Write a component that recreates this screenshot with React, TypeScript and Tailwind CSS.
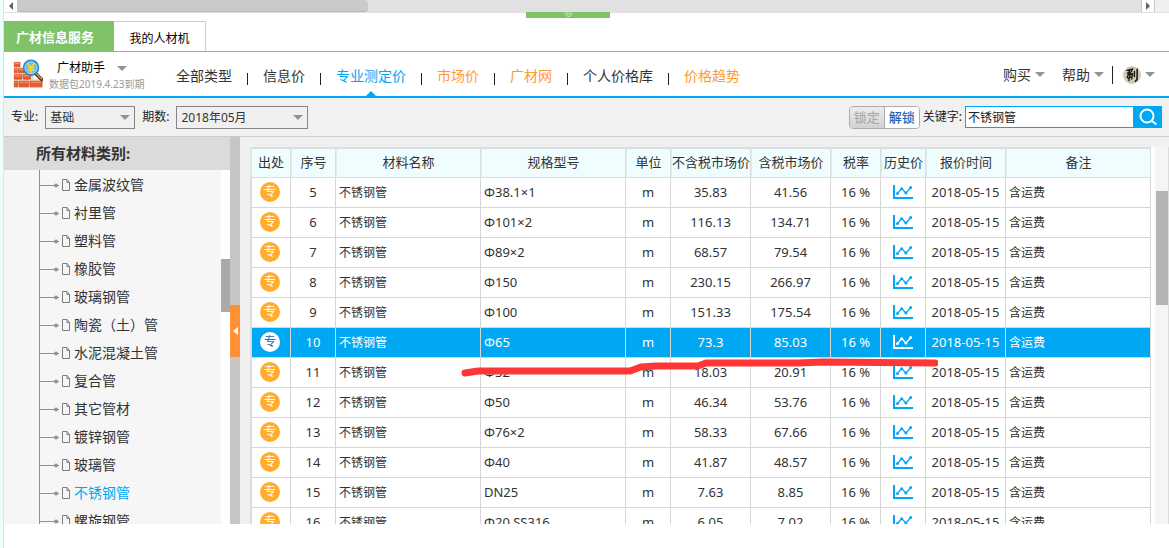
import React, { useState } from "react";

type Row = { no: number; spec: string; net: string; gross: string };

const rows: Row[] = [
  { no: 5, spec: "Φ38.1×1", net: "35.83", gross: "41.56" },
  { no: 6, spec: "Φ101×2", net: "116.13", gross: "134.71" },
  { no: 7, spec: "Φ89×2", net: "68.57", gross: "79.54" },
  { no: 8, spec: "Φ150", net: "230.15", gross: "266.97" },
  { no: 9, spec: "Φ100", net: "151.33", gross: "175.54" },
  { no: 10, spec: "Φ65", net: "73.3", gross: "85.03" },
  { no: 11, spec: "Φ32", net: "18.03", gross: "20.91" },
  { no: 12, spec: "Φ50", net: "46.34", gross: "53.76" },
  { no: 13, spec: "Φ76×2", net: "58.33", gross: "67.66" },
  { no: 14, spec: "Φ40", net: "41.87", gross: "48.57" },
  { no: 15, spec: "DN25", net: "7.63", gross: "8.85" },
  { no: 16, spec: "Φ20 SS316", net: "6.05", gross: "7.02" },
];

const categories = [
  "金属波纹管", "衬里管", "塑料管", "橡胶管", "玻璃钢管", "陶瓷（土）管", "水泥混凝土管",
  "复合管", "其它管材", "镀锌钢管", "玻璃管", "不锈钢管", "螺旋钢管",
];

const navItems = [
  { label: "全部类型", tone: "text-[#333]" },
  { label: "信息价", tone: "text-[#333]" },
  { label: "专业测定价", tone: "text-[#00a8f3]", active: true },
  { label: "市场价", tone: "text-[#ff9933]" },
  { label: "广材网", tone: "text-[#ff9933]" },
  { label: "个人价格库", tone: "text-[#333]" },
  { label: "价格趋势", tone: "text-[#ff9933]" },
];

const columns = [
  { label: "出处", width: "w-10" },
  { label: "序号", width: "w-[45px]" },
  { label: "材料名称", width: "w-[145px]" },
  { label: "规格型号", width: "w-[145px]" },
  { label: "单位", width: "w-[45px]" },
  { label: "不含税市场价", width: "w-20" },
  { label: "含税市场价", width: "w-20" },
  { label: "税率", width: "w-[50px]" },
  { label: "历史价", width: "w-[45px]" },
  { label: "报价时间", width: "w-20" },
  { label: "备注", width: "" },
];

function Caret({ className = "" }: { className?: string }) {
  return (
    <svg viewBox="0 0 10 5" className={`h-[5px] w-[10px] shrink-0 fill-[#939393] ${className}`} aria-hidden="true">
      <path d="M0 0h10L5 5z" />
    </svg>
  );
}

function Logo() {
  return (
    <svg viewBox="0 0 30 30" className="h-[30px] w-[30px]" aria-hidden="true">
      <path d="M1 3h7v7h9v5h4v5h9v9H1z" fill="#f7d9bd" />
      <g fill="#ee5a30" stroke="#b93415" strokeWidth=".5">
        <path d="M1.3 3.4h5.4v4.4H1.3zM1.3 9.4h3v4.4h-3zM5.5 9.4h7v4.4h-7zM1.3 15.6h7.6v4.6H1.3zM10.3 15.6h7.3v4.6h-7.3zM1.3 22.1h3.6v5.7H1.3zM6.2 22.1h9.4v5.7H6.2zM17 22.1h12v5.7H17z" />
      </g>
      <g fill="#ff9a60">
        <path d="M2 4h4v1H2zM2 10h2v1H2zM6 10h5v1H6zM2 16.2h6v1H2zM11 16.2h6v1h-6zM2 22.7h2v1H2zM7 22.7h8v1H7zM18 22.7h10v1H18z" />
      </g>
      <path d="M22.5 14.5l6.2 6" stroke="#5c3824" strokeWidth="3.4" strokeLinecap="round" />
      <path d="M23.5 15l5 4.8" stroke="#d9914b" strokeWidth="1.3" strokeLinecap="round" />
      <circle cx="18" cy="8.7" r="7.4" fill="#66bdf0" stroke="#2589c7" strokeWidth="1.7" />
      <circle cx="18" cy="8.7" r="6" fill="none" stroke="#b4e3fa" strokeWidth=".8" />
      <path d="M14.5 4.3l3.5 4 3.5-4M18 8.3v5.4M14.8 8.5h6.4M14.8 11h6.4" fill="none" stroke="#f8cf2c" strokeWidth="2" />
    </svg>
  );
}

function Avatar() {
  return (
    <svg viewBox="0 0 18 18" className="h-[18px] w-[18px]" aria-hidden="true">
      <circle cx="9" cy="9" r="9" fill="#d2cab8" />
      <g fill="none" stroke="#17130f" strokeLinecap="round" strokeLinejoin="round">
        <path d="M4 4.4L9.8 3 8.2 5.8 4.4 7.2M6.6 4.4L4.2 11.5M5.3 8.8l4.2-1.2-.8 5.6M7.3 7l-1.4 7.7M5 12.2l3-1.2" strokeWidth="1.3" />
        <path d="M11.4 5.4v5.2M14.2 3.2l-.2 10.4-1.7 1.7" strokeWidth="1.5" />
      </g>
    </svg>
  );
}

function TrendIcon() {
  return (
    <svg viewBox="0 0 20 15" className="mx-auto block h-[15px] w-5" fill="none" stroke="currentColor" aria-hidden="true">
      <path d="M1 0v13h19" strokeWidth="2" />
      <path d="M4.5 8.5l4.2-5 4.2 4.5 5-5.5" strokeWidth="1.3" />
      <g fill="currentColor" stroke="none">
        <circle cx="4.5" cy="8.5" r="1.5" />
        <circle cx="8.7" cy="3.7" r="1.5" />
        <circle cx="12.9" cy="8" r="1.5" />
        <circle cx="17.7" cy="2.6" r="1.5" />
      </g>
    </svg>
  );
}

function Combo({ id, label, options, width }: { id: string; label: string; options: string[]; width: string }) {
  return (
    <div className="flex items-center gap-[7px]">
      <label htmlFor={id}>{label}</label>
      <div className={`relative ${width}`}>
        <select id={id} className="h-[23px] w-full appearance-none border border-[#858585] bg-[#f0f0f0] pt-px pl-1 text-xs text-[#333] outline-none">
          {options.map((o) => (
            <option key={o}>{o}</option>
          ))}
        </select>
        <Caret className="pointer-events-none absolute top-[9px] right-[5px]" />
      </div>
    </div>
  );
}

function TopScroll() {
  return (
    <div className="relative flex h-[13px] shrink-0 border-b border-[#e1e1e1] bg-[#e1e1e1]">
      <button aria-label="向左滚动" className="flex w-[14px] items-center justify-center border-r border-[#c8c8c8] bg-white">
        <svg viewBox="0 0 4 8" className="h-2 w-1 fill-[#606060]"><path d="M4 0v8L0 4z" /></svg>
      </button>
      <div className="w-[30%] rounded-r-sm border-b border-[#b8b8b8] bg-[#cacaca]" />
      <div className="flex-1" />
      <button aria-label="向右滚动" className="flex w-[14px] items-center justify-center border-x border-[#c8c8c8] bg-white">
        <svg viewBox="0 0 4 8" className="h-2 w-1 fill-[#606060]"><path d="M0 0v8l4-4z" /></svg>
      </button>
      <div className="w-[14px] bg-[#f0f0f0]" />
      <button aria-label="收起面板" className="absolute top-3 left-[calc(50%-61px)] z-10 flex h-[6px] w-[84px] justify-center bg-[#80c269]">
        <svg viewBox="0 0 9 6" className="ml-[2px] h-[6px] w-[9px] fill-none stroke-[#dff3d6]"><path d="M2.5 0l2 2 2-2M.5 1l4 4 4-4" /></svg>
      </button>
    </div>
  );
}

function Tree({ current, onPick }: { current: string; onPick: (c: string) => void }) {
  return (
    <aside className="flex w-[226px] shrink-0 flex-col">
      <h2 className="h-[33px] shrink-0 bg-[#dbdbdb] pl-8 text-[15px] leading-[33px] font-bold text-[#333]">所有材料类别:</h2>
      <div className="flex min-h-0 flex-1">
        <div className="flex-1 overflow-hidden bg-[#f6f6f6] pl-[35px]">
          <ul className="border-l border-[#8e8e9c] pt-px">
            {categories.map((c) => (
              <li key={c} className="flex h-7 items-center">
                <svg viewBox="0 0 19 6" className="h-[6px] w-[19px]" aria-hidden="true">
                  <path d="M0 3.5h19" stroke="#8e93a3" />
                  <circle cx="16" cy="3.5" r="2" fill="#8e93a3" />
                </svg>
                <svg viewBox="0 0 8 12" className="ml-[3px] h-3 w-2 fill-none stroke-[#7d7d7d]" aria-hidden="true">
                  <path d="M.5.5h4.5l2.5 3v8h-7zM5 .5v3h2.5" />
                </svg>
                <a href="#category" onClick={(e) => { e.preventDefault(); onPick(c); }}
                  className={`ml-1 text-sm whitespace-nowrap ${c === current ? "text-[#00a8f3]" : "text-[#333]"}`}>
                  {c}
                </a>
              </li>
            ))}
          </ul>
        </div>
        <div className="w-[9px] bg-white pt-[89px]">
          <div className="h-[53px] bg-[#a9a9a9]" />
        </div>
      </div>
    </aside>
  );
}

function PriceTable() {
  const [picked, setPicked] = useState(10);
  const cell = "border-r border-b border-[#d6d6d6] p-0";
  const figure = `${cell} pb-px`;
  return (
    <div className="relative flex min-w-0 flex-1 overflow-hidden pt-[10px] pl-[10px]">
      <div className="min-w-0 flex-1">
        <table className="w-full table-fixed border-separate border-spacing-0 border-l border-[#dde3e3] bg-white text-[13px] text-[#333]">
          <thead>
            <tr className="h-[31px]">
              {columns.map((c) => (
                <th key={c.label} className={`${c.width} border-t-2 border-r border-b border-l border-[#d9dede] border-l-[#e3eaea] bg-[#f0fdff] p-0 font-normal whitespace-nowrap`}>
                  <span className="flex justify-center">{c.label}</span>
                </th>
              ))}
            </tr>
          </thead>
          <tbody>
            {rows.map((r) => {
              const on = r.no === picked;
              return (
                <tr key={r.no} onClick={() => setPicked(r.no)} className={`h-[30px] text-center leading-5 ${on ? "bg-[#00a8f3] text-white" : ""}`}>
                  <td className={`${figure} border-l`}>
                    <span className={`ml-2 flex h-5 w-5 items-center justify-center rounded-full text-xs ${on ? "bg-white text-[#2068b0]" : "bg-[#ffac2f] text-white"}`}>专</span>
                  </td>
                  <td className={figure}>{r.no}</td>
                  <td className={`${cell} pl-[3px] text-left text-xs`}>不锈钢管</td>
                  <td className={`${figure} pl-[3px] text-left`}>{r.spec}</td>
                  <td className={figure}>m</td>
                  <td className={figure}>{r.net}</td>
                  <td className={figure}>{r.gross}</td>
                  <td className={figure}>16 %</td>
                  <td className={`${cell} ${on ? "text-white" : "text-[#00a8f3]"}`}><TrendIcon /></td>
                  <td className={`${figure} whitespace-nowrap`}>2018-05-15</td>
                  <td className={`${cell} pl-[3px] text-left text-xs`}>含运费</td>
                </tr>
              );
            })}
          </tbody>
        </table>
      </div>
      <div className="w-1 shrink-0 bg-white" />
      <div className="w-[13px] shrink-0 bg-[#f5f5f5] pt-11 pl-px">
        <div className="h-[114px] w-3 bg-[#b4b4b4]" />
      </div>
      <div className="w-px shrink-0 bg-[#dcdcdc]" />
      <svg viewBox="0 0 480 24" className="pointer-events-none absolute top-[219px] left-[218px] h-6 w-[480px]" aria-hidden="true">
        <path d="M7 17L20 15 172 15 183 11 198 10 240 10 248 7 340 7 365 6 477 7" fill="none" stroke="#fd3737" strokeWidth="7" strokeLinecap="round" strokeLinejoin="round" />
      </svg>
    </div>
  );
}

export default function App() {
  const [category, setCategory] = useState("不锈钢管");
  return (
    <div className="flex h-screen overflow-hidden bg-white font-['Noto_Sans','Noto_Sans_CJK_SC',sans-serif] text-xs text-[#222]">
      <div className="w-1 shrink-0 border-r border-[#dfe3e5] bg-[#f0fdff]" />
      <div className="flex min-w-0 flex-1 flex-col">
        <TopScroll />

        <div className="flex h-[39px] shrink-0 items-end border-b border-[#80c269]" role="tablist">
          <button role="tab" aria-selected="true" className="h-[30px] w-[110px] bg-[#80c269] pt-[3px] pr-2 text-[13px] font-bold text-white">广材信息服务</button>
          <button role="tab" aria-selected="false" className="h-[30px] w-[92px] border-t border-r border-[#b5e0a3] pt-1 text-black">我的人材机</button>
        </div>

        <header className="flex h-[46px] shrink-0 border-b-2 border-[#00a8f3]">
          <div className="flex w-[172px] shrink-0 items-center pl-[9px]">
            <Logo />
            <div className="ml-[6px] pt-1">
              <button className="flex h-4 items-center gap-3 pl-2 text-black">
                广材助手 <Caret />
              </button>
              <p className="text-[10px] leading-4 whitespace-nowrap text-[#999]">数据包2019.4.23到期</p>
            </div>
          </div>
          <nav className="flex flex-1 text-sm whitespace-nowrap">
            {navItems.map((n, i) => (
              <React.Fragment key={n.label}>
                {i > 0 && <span className="mx-[15px] mt-[21px] h-3 w-px bg-[#222]" />}
                <a href="#section" className={`relative leading-[48px] ${n.tone}`}>
                  {n.label}
                  {n.active && (
                    <svg viewBox="0 0 10 5" className="absolute bottom-0 left-[calc(50%-5px)] h-[5px] w-[10px] fill-[#00a8f3]"><path d="M0 5l5-5 5 5z" /></svg>
                  )}
                </a>
              </React.Fragment>
            ))}
          </nav>
          <div className="flex items-center pt-px pr-[14px] text-sm text-[#333]">
            <button className="flex items-center gap-1">购买<Caret /></button>
            <button className="ml-[17px] flex items-center gap-1">帮助<Caret /></button>
            <span className="ml-2 h-[18px] w-px bg-[#222]" />
            <button aria-label="账户" className="ml-[10px] flex items-center gap-1"><Avatar /><Caret /></button>
          </div>
        </header>

        <div className="flex h-[39px] shrink-0 items-center border-b border-[#cbcbcb] bg-[#f1f1f1] px-[7px]">
          <Combo id="major" label="专业:" options={["基础"]} width="w-[90px]" />
          <div className="w-[7px]" />
          <Combo id="period" label="期数:" options={["2018年05月"]} width="w-[132px]" />
          <div className="flex-1" />
          <div className="mr-[3px] flex h-[23px] overflow-hidden rounded-sm border border-[#acacac] text-[13px] leading-5">
            <button className="w-[35px] border-r border-[#acacac] bg-linear-to-b from-[#ececec] to-[#d2d2d2] text-[#a5a5a5]">锁定</button>
            <button className="w-[34px] bg-white font-medium text-[#1f64b4]">解锁</button>
          </div>
          <label htmlFor="keyword" className="mr-[3px]">关键字:</label>
          <input id="keyword" defaultValue="不锈钢管" className="h-[22px] w-[169px] border border-[#00a8f3] bg-white pl-[2px] text-xs text-[#222] outline-none" />
          <button aria-label="搜索" className="flex h-[22px] w-7 items-center justify-center bg-[#00a8f3]">
            <svg viewBox="0 0 18 18" className="h-[18px] w-[18px] fill-none stroke-white stroke-2" strokeLinecap="round"><circle cx="8" cy="8" r="6.5" /><path d="M12.8 12.8l4 3.2" /></svg>
          </button>
        </div>

        <main className="mb-6 flex min-h-0 flex-1 bg-[#f0f0f0]">
          <Tree current={category} onPick={setCategory} />
          <div className="w-[10px] shrink-0 bg-[#c8c6c4] pt-[168px]">
            <button aria-label="收起分类" className="flex h-[52px] w-[10px] items-center justify-center bg-[#ff9033]">
              <svg viewBox="0 0 5 8" className="h-2 w-[5px] fill-white"><path d="M5 0v8L0 4z" /></svg>
            </button>
          </div>
          <PriceTable />
        </main>
      </div>
    </div>
  );
}
